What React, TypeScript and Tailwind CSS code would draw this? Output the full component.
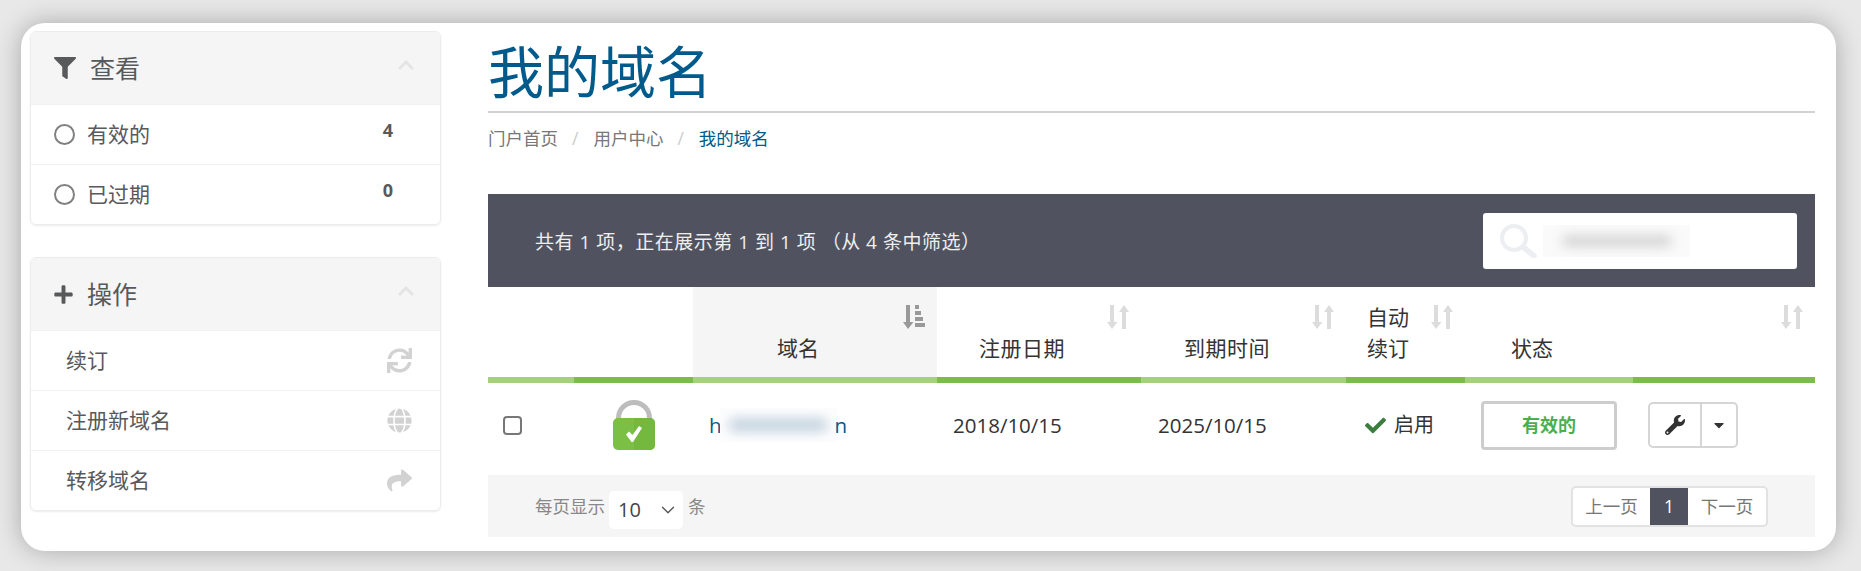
import { ChevronDown } from "lucide-react";
import {
  FaCaretDown,
  FaCheck,
  FaChevronUp,
  FaFilter,
  FaGlobe,
  FaPlus,
  FaShare,
  FaSync,
  FaWrench,
} from "react-icons/fa";

function SortBoth() {
  return (
    <svg viewBox="0 0 22 24" className="h-[24px] w-[22px] fill-[#dcdcdc]" aria-hidden="true">
      <path d="M3 0h4v17h3.5L5 24 0 17h3z" />
      <path d="M15 7h4v17h-4z" />
      <path d="M17 0l5 7H12z" />
    </svg>
  );
}

function SortActive() {
  return (
    <svg viewBox="0 0 22 24" className="h-[24px] w-[22px] fill-[#999]" aria-hidden="true">
      <path d="M3 0h4v17h3.5L5 24 0 17h3z" />
      <path d="M12 0h4v4h-4zM12 6h6v4h-6zM12 12h8v4h-8zM12 18h10v4H12z" />
    </svg>
  );
}

function Panel({ title, icon, children }: { title: string; icon: React.ReactNode; children: React.ReactNode }) {
  return (
    <section className="overflow-hidden rounded-[6px] border border-[#ececec] shadow-[0_1px_2px_rgba(0,0,0,0.08)]">
      <header className="flex h-[72px] items-center bg-[#f5f5f5] pl-[23px] pr-[25px] text-[25px] text-[#58595b]">
        {icon}
        <span className="flex-1 pt-[2px]">{title}</span>
        <FaChevronUp className="mb-[7px] h-[18px] w-[18px] text-[#e4e4e4]" />
      </header>
      {children}
    </section>
  );
}

function FilterRow({ label, count }: { label: string; count: number }) {
  return (
    <div className="flex h-[60px] items-center border-t border-[#f1f1f1] pl-[23px] pr-[47px] first:border-t-0 text-[21px] text-[#58595b]">
      <span className="mr-[12px] h-[21px] w-[21px] rounded-full border-2 border-[#808080]" />
      <span className="flex-1">{label}</span>
      <span className="mb-[8px] text-[18px] font-bold">{count}</span>
    </div>
  );
}

function ActionRow({ label, icon }: { label: string; icon: React.ReactNode }) {
  return (
    <div className="flex h-[60px] items-center border-t border-[#f1f1f1] pl-[35px] pr-[28px] first:border-t-0 text-[21px] text-[#58595b]">
      <span className="flex-1">{label}</span>
      {icon}
    </div>
  );
}

function HeaderCell({ className, children, sort }: { className: string; children?: React.ReactNode; sort?: "both" | "active" }) {
  return (
    <th className={`relative h-[96px] border-b-[6px] pb-[13px] align-bottom text-left text-[21px] font-normal leading-[31px] text-[#333] ${className}`}>
      {sort && (
        <span className="absolute right-[12px] top-[18px]">
          {sort === "active" ? <SortActive /> : <SortBoth />}
        </span>
      )}
      {children}
    </th>
  );
}

export default function App() {
  return (
    <div className="h-[571px] bg-[#e8e8e8] pb-[20px] pl-[21px] pr-[25px] pt-[23px] font-['Open_Sans','Noto_Sans_CJK_SC',sans-serif]">
      <div className="flex h-[528px] rounded-[24px] bg-white pl-[9px] pt-[8px] shadow-[0_0_26px_rgba(0,0,0,0.28)]">
        <aside className="flex w-[411px] flex-col gap-[32px]">
          <Panel title="查看" icon={<FaFilter className="mr-[14px] h-[22px] w-[22px]" />}>
            <FilterRow label="有效的" count={4} />
            <FilterRow label="已过期" count={0} />
          </Panel>
          <Panel title="操作" icon={<FaPlus className="-ml-[1px] mr-[13px] h-[21px] w-[21px]" />}>
            <ActionRow label="续订" icon={<FaSync className="h-[25px] w-[25px] text-[#d2d2d2]" />} />
            <ActionRow label="注册新域名" icon={<FaGlobe className="h-[25px] w-[25px] text-[#d2d2d2]" />} />
            <ActionRow label="转移域名" icon={<FaShare className="h-[25px] w-[25px] text-[#d2d2d2]" />} />
          </Panel>
        </aside>

        <main className="ml-[47px] w-[1327px]">
          <h1 className="-mt-[8px] h-[90px] border-b-2 border-[#d2d2d2] text-[56px] font-normal leading-[96px] text-[#005a8c]">
            我的域名
          </h1>
          <nav className="mt-[13px] flex h-[24px] items-center text-[17.5px] leading-[24px] text-[#777]">
            <span>门户首页</span>
            <span className="ml-[14px] mr-[15px] text-[#ccc]">/</span>
            <span>用户中心</span>
            <span className="ml-[14px] mr-[15px] text-[#ccc]">/</span>
            <span className="text-[#005a8c]">我的域名</span>
          </nav>

          <div className="mt-[44px] flex h-[93px] items-center justify-between bg-[#50535f] pl-[47px] pr-[18px] text-[19px] text-[#eee]">
            <span className="pt-[3px] tracking-[0.5px]">共有 1 项，正在展示第 1 到 1 项 （从 4 条中筛选）</span>
            <div className="flex h-[56px] w-[314px] items-center rounded-[3px] bg-white pl-[16px]">
              <svg viewBox="0 0 38 34" className="h-[34px] w-[38px] fill-none stroke-[#eceef1]" aria-hidden="true">
                <circle cx="15" cy="14" r="12" strokeWidth="4" />
                <path d="M24 23l11 9" strokeWidth="5.5" strokeLinecap="round" />
              </svg>
              <div className="ml-[6px] flex h-[32px] w-[147px] items-center justify-center overflow-hidden bg-[#fafafa]">
                <div className="h-[10px] w-[110px] rounded-full bg-[#cfcfcf] blur-[6px]" />
              </div>
            </div>
          </div>

          <table className="w-full table-fixed border-separate border-spacing-0">
            <colgroup>
              <col className="w-[86px]" />
              <col className="w-[119px]" />
              <col className="w-[244px]" />
              <col className="w-[204px]" />
              <col className="w-[205px]" />
              <col className="w-[119px]" />
              <col className="w-[168px]" />
              <col className="w-[182px]" />
            </colgroup>
            <thead>
              <tr>
                <th className="h-[96px] border-b-[6px] border-[#a5d17f]" />
                <th className="border-b-[6px] border-[#7cbc4b]" />
                <HeaderCell className="border-[#a5d17f] bg-[#f5f5f5] pl-[84px]" sort="active">
                  域名
                </HeaderCell>
                <HeaderCell className="border-[#7cbc4b] pl-[42px] tracking-[0.5px]" sort="both">
                  注册日期
                </HeaderCell>
                <HeaderCell className="border-[#a5d17f] pl-[43px] tracking-[0.5px]" sort="both">
                  到期时间
                </HeaderCell>
                <HeaderCell className="border-[#7cbc4b] pl-[21px]" sort="both">
                  自动
                  <br />
                  续订
                </HeaderCell>
                <HeaderCell className="border-[#a5d17f] pl-[46px]">状态</HeaderCell>
                <HeaderCell className="border-[#7cbc4b]" sort="both" />
              </tr>
            </thead>
            <tbody>
              <tr className="h-[92px] text-[20.5px] text-[#333]">
                <td className="pb-[8px] pl-[15px]">
                  <span className="block h-[19px] w-[19px] rounded-[4px] border-2 border-[#777]" />
                </td>
                <td className="pb-[8px] pl-[39px]">
                  <svg viewBox="0 0 42 50" className="block h-[50px] w-[42px]" aria-hidden="true">
                    <path d="M5.5 22V18a15.5 15.5 0 0 1 31 0v4" fill="none" stroke="#bdbdbd" strokeWidth="5" />
                    <rect x="0" y="18" width="42" height="32" rx="5" fill="#7cbf45" />
                    <path d="M21 18h16a5 5 0 0 1 5 5v22a5 5 0 0 1-5 5H21z" fill="#74b93e" />
                    <path d="M13 34.5l3-3 3.5 3.5 6.5-9 3 2-9 14h-1.5z" fill="#fff" />
                  </svg>
                </td>
                <td className="pb-[8px] pl-[16px] text-[#005a8c]">
                  <span className="flex items-center">
                    h
                    <span className="-mx-[2px] flex h-[34px] w-[117px] items-center justify-center overflow-hidden bg-[#fdfdfe]">
                      <span className="h-[14px] w-[100px] rounded-full bg-[#c5d3e0] blur-[6px]" />
                    </span>
                    n
                  </span>
                </td>
                <td className="pb-[8px] pl-[16px]">2018/10/15</td>
                <td className="pb-[8px] pl-[17px]">2025/10/15</td>
                <td className="pb-[8px] pl-[19px] text-[20px]">
                  <span className="flex items-center gap-[8px]">
                    <FaCheck className="h-[21px] w-[21px] text-[#3c7d40]" />
                    启用
                  </span>
                </td>
                <td className="pb-[8px] pl-[16px]">
                  <span className="flex h-[49px] w-[136px] items-center justify-center rounded-[4px] border-[3px] border-[#cdcdcd] text-[18px] font-bold text-[#4cae4c]">
                    有效的
                  </span>
                </td>
                <td className="pb-[8px] pl-[15px]">
                  <span className="flex h-[46px] w-[90px] rounded-[5px] border-2 border-[#d5d5d5]">
                    <span className="flex w-[52px] items-center justify-center border-r-2 border-[#d5d5d5]">
                      <FaWrench className="h-[20px] w-[20px] text-[#333]" />
                    </span>
                    <span className="flex flex-1 items-center justify-center">
                      <FaCaretDown className="h-[16px] w-[16px] text-[#333]" />
                    </span>
                  </span>
                </td>
              </tr>
            </tbody>
          </table>

          <div className="flex h-[62px] items-center justify-between bg-[#f5f5f5] pl-[47px] pr-[47px]">
            <div className="flex items-center text-[17.5px] text-[#888]">
              <span>每页显示</span>
              <span className="ml-[4px] mr-[5px] mt-[8px] flex h-[38px] w-[74px] items-center justify-between rounded-[5px] bg-white pl-[9px] pr-[4px] text-[20px] text-[#444]">
                10
                <ChevronDown className="h-[22px] w-[22px] text-[#555]" strokeWidth={1.5} />
              </span>
              <span>条</span>
            </div>
            <div className="flex h-[41px] overflow-hidden rounded-[5px] border-2 border-[#e2e2e2] bg-white text-[17.5px] text-[#777]">
              <span className="flex w-[77px] items-center justify-center">上一页</span>
              <span className="-my-[2px] flex w-[38px] items-center justify-center bg-[#50535f] text-white">1</span>
              <span className="flex w-[78px] items-center justify-center">下一页</span>
            </div>
          </div>
        </main>
      </div>
    </div>
  );
}
